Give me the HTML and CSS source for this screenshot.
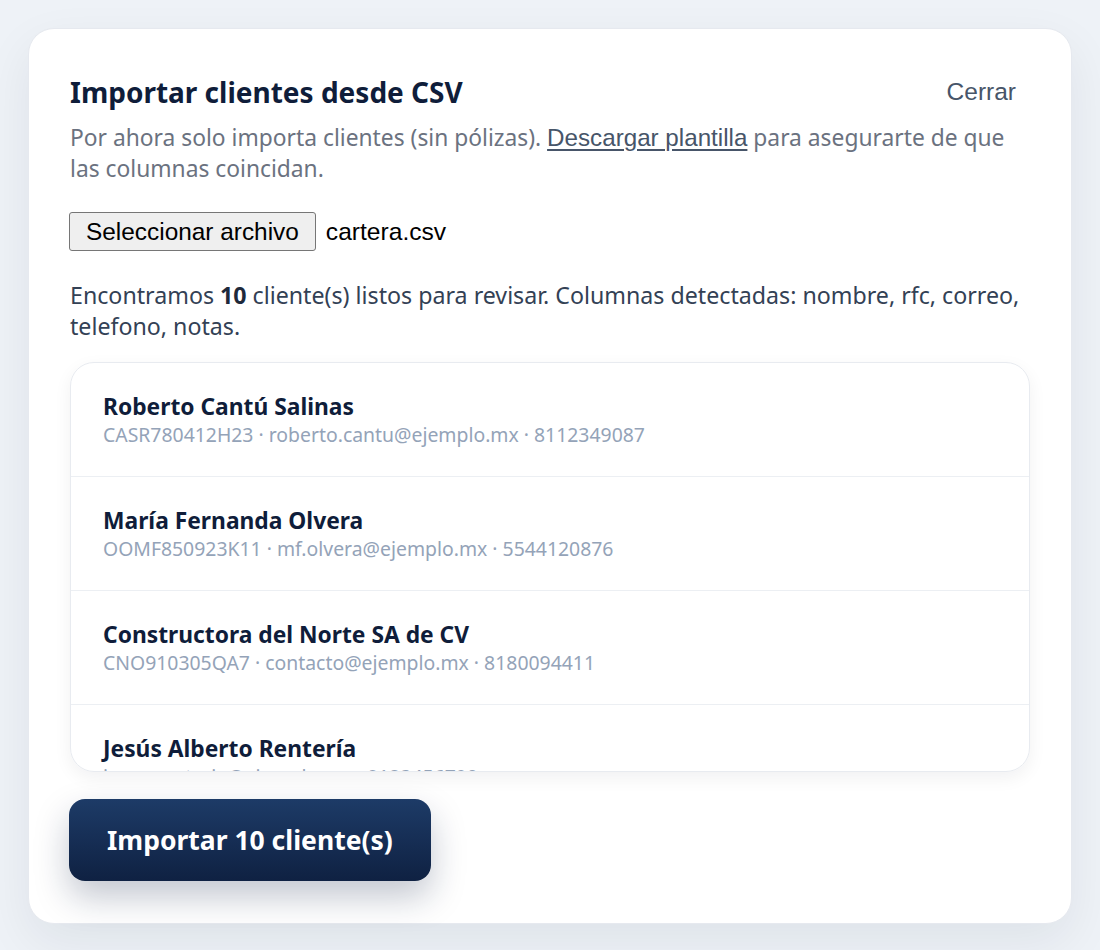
FILE: index.html
```html
<!DOCTYPE html>
<html lang="es">
<head>
<meta charset="utf-8">
<title>Importar clientes desde CSV</title>
<link rel="stylesheet" href="styles.css">
</head>
<body>
<div class="page">
  <section class="card">
    <header class="card-header">
      <h1 class="title">Importar clientes desde CSV</h1>
      <button class="link-btn close-btn" type="button">Cerrar</button>
    </header>
    <p class="desc">Por ahora solo importa clientes (sin pólizas). <button class="link-btn inline-link" type="button">Descargar plantilla</button> para asegurarte de que las columnas coincidan.</p>
    <div class="file-row">
      <button class="file-btn" type="button">Seleccionar archivo</button>
      <span class="file-name">cartera.csv</span>
    </div>
    <p class="summary">Encontramos <strong>10</strong> cliente(s) listos para revisar. Columnas detectadas: nombre, rfc, correo, telefono, notas.</p>
    <ul class="client-list">
      <li class="client"><div class="client-name">Roberto Cantú Salinas</div><div class="client-meta">CASR780412H23 · roberto.cantu@ejemplo.mx · 8112349087</div></li>
      <li class="client"><div class="client-name">María Fernanda Olvera</div><div class="client-meta">OOMF850923K11 · mf.olvera@ejemplo.mx · 5544120876</div></li>
      <li class="client"><div class="client-name">Constructora del Norte SA de CV</div><div class="client-meta">CNO910305QA7 · contacto@ejemplo.mx · 8180094411</div></li>
      <li class="client"><div class="client-name">Jesús Alberto Rentería</div><div class="client-meta">jesus.renteria@ejemplo.mx · 8123456790</div></li>
      <li class="client"><div class="client-name">Ana Lucía Garza</div><div class="client-meta">GALA900217MN4 · ana.garza@ejemplo.mx · 8119873344</div></li>
      <li class="client"><div class="client-name">Transportes Villarreal</div><div class="client-meta">TVI050812RT2 · logistica@ejemplo.mx · 8183321100</div></li>
      <li class="client"><div class="client-name">Luis Enrique Treviño</div><div class="client-meta">TELL820630HB8 · luis.trevino@ejemplo.mx · 8126654400</div></li>
      <li class="client"><div class="client-name">Patricia Salazar Montes</div><div class="client-meta">SAMP760114PL5 · p.salazar@ejemplo.mx · 5512349876</div></li>
      <li class="client"><div class="client-name">Comercializadora Regia</div><div class="client-meta">CRE120409KK9 · ventas@ejemplo.mx · 8180012233</div></li>
      <li class="client"><div class="client-name">Diego Hernández Ruiz</div><div class="client-meta">HERD930527AB1 · diego.hr@ejemplo.mx · 8115567788</div></li>
    </ul>
    <button class="primary-btn" type="button">Importar 10 cliente(s)</button>
  </section>
</div>
</body>
</html>
```

FILE: styles.css
```css
* { box-sizing: border-box; }

html, body {
  margin: 0;
  padding: 0;
  background: #eef2f7;
}

body {
  font-family: "Noto Sans", "Open Sans", sans-serif;
  color: #0f1d3a;
}

.page {
  padding: 28px;
}

.card {
  background: #ffffff;
  border: 1px solid #e6e9ef;
  border-radius: 26px;
  padding: 41px 41px 42px;
  box-shadow: 0 18px 50px rgba(15, 23, 42, 0.07);
}

.card-header {
  display: flex;
  align-items: center;
  justify-content: space-between;
  height: 44px;
}

.title {
  margin: 0;
  font-size: 28px;
  font-weight: 700;
  color: #0f1d3a;
  line-height: 34px;
}

.link-btn {
  background: transparent;
  border: none;
  font-family: "Liberation Sans", Arial, sans-serif;
  color: #475569;
  cursor: pointer;
}

.close-btn {
  font-size: 24.5px;
  padding: 6px 14px;
}

.desc {
  margin: 8px 0 0;
  font-size: 22.8px;
  line-height: 31px;
  color: #6b7280;
}

.inline-link {
  font-size: 24.2px;
  line-height: 28px;
  padding: 0;
  text-decoration: underline;
  text-underline-offset: 3px;
}

.file-row {
  margin-top: 28px;
  display: flex;
  align-items: center;
  gap: 10px;
}

.file-btn {
  font-family: "Liberation Sans", Arial, sans-serif;
  font-size: 24.4px;
  color: #000;
  background: #efefef;
  border: 1px solid #767676;
  border-radius: 3px;
  height: 39px;
  padding: 0 16px;
  margin-left: -1px;
}

.file-name {
  font-family: "Liberation Sans", Arial, sans-serif;
  font-size: 24.6px;
  color: #000;
}

.summary {
  margin: 29px 0 0;
  font-size: 23.2px;
  line-height: 31px;
  color: #334155;
}

.summary strong {
  color: #1e293b;
}

.client-list {
  list-style: none;
  margin: 20px 0 0;
  padding: 0;
  height: 410px;
  overflow-y: auto;
  scrollbar-width: none;
  border: 1px solid #e8ebf0;
  border-radius: 24px;
  box-shadow: 0 6px 18px rgba(15, 23, 42, 0.06);
}

.client-list::-webkit-scrollbar { display: none; }

.client {
  padding: 30px 32px 27px;
  border-bottom: 1px solid #eceff3;
}

.client-name {
  font-size: 22.8px;
  font-weight: 700;
  line-height: 28px;
  color: #0f1d3a;
}

.client-meta {
  font-size: 19.4px;
  line-height: 28px;
  color: #94a3b8;
}

.primary-btn {
  margin-top: 27px;
  margin-left: -1px;
  display: block;
  height: 82px;
  padding: 0 38px;
  border: none;
  border-radius: 16px;
  background: linear-gradient(180deg, #1d3b67 0%, #0f2142 100%);
  color: #ffffff;
  font-family: "Noto Sans", "Open Sans", sans-serif;
  font-size: 26.5px;
  font-weight: 700;
  box-shadow: 0 16px 34px rgba(15, 33, 66, 0.25);
  cursor: pointer;
}
```
